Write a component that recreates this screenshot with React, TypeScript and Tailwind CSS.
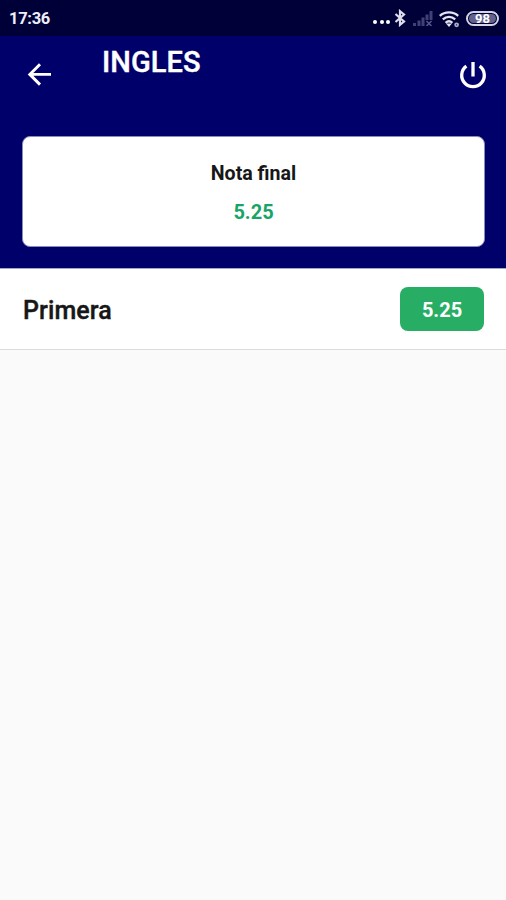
import type { ReactNode } from "react";

type Term = { name: string; grade: string };

const terms: Term[] = [{ name: "Primera", grade: "5.25" }];

function BluetoothIcon() {
  return (
    <svg width="12" height="18" viewBox="0 0 12 18" fill="none" stroke="#dedeee" strokeWidth="2.2">
      <path d="M1.5 5 10 12.5 6 15.8V2.2L10 5.5 1.5 13" />
    </svg>
  );
}

function SignalIcon() {
  return (
    <svg width="20" height="15" viewBox="0 0 20 15" fill="#404074">
      <path d="M0 12h3v3H0zM4.5 9.5h3V15h-3zM8.5 6.5h3V15h-3zM12.5 3.5h3V9h-3zM16.5 0h3v9h-3z" />
      <path d="m13.5 10 5 5m0-5-5 5" stroke="#55558a" strokeWidth="1.6" />
    </svg>
  );
}

function WifiIcon() {
  return (
    <svg width="22" height="17" viewBox="0 0 22 17" fill="none" stroke="#e4e4f0" strokeWidth="2.3">
      <path d="M.8 4.8c5.2-4.6 13.2-4.6 18.4 0M3.8 8.4c3.7-3.2 8.7-3.2 12.4 0M6.6 11.8c2-1.8 4.8-1.8 6.8 0" />
      <path d="m7 12.4 3 3.6 3-3.6z" fill="#e4e4f0" stroke="none" />
      <circle cx="17.6" cy="13.8" r="1.5" stroke="#aaaacb" strokeWidth="1.8" />
    </svg>
  );
}

function Battery({ children }: { children: ReactNode }) {
  return (
    <div className="flex h-[15px] w-[33px] items-center justify-center rounded-full border-2 border-[#d4d4e5] p-px">
      <div className="flex h-full w-full items-center justify-center rounded-full bg-[#62628c] text-[13px] leading-none font-bold text-white">
        {children}
      </div>
    </div>
  );
}

function StatusBar() {
  return (
    <div className="flex h-9 items-center bg-[#000038] pr-[7px] pl-[9px] text-[#eeeef7]">
      <span className="pt-0.5 text-[16.5px] leading-none font-bold tracking-[-0.3px]">17:36</span>
      <div className="ml-auto flex items-center">
        <div className="mt-2 mr-1 flex gap-[2.5px]">
          <span className="size-1 rounded-full bg-white" />
          <span className="size-1 rounded-full bg-white" />
          <span className="size-1 rounded-full bg-white" />
        </div>
        <BluetoothIcon />
        <span className="ml-[7px]">
          <SignalIcon />
        </span>
        <span className="mt-0.5 mr-[5px] ml-1.5">
          <WifiIcon />
        </span>
        <Battery>98</Battery>
      </div>
    </div>
  );
}

function Header() {
  return (
    <header className="h-[232px] bg-[#00006b] pr-[21px] pl-[22px] text-white">
      <div className="flex h-[100px] items-start">
        <button className="mt-[26px] ml-[5px]" aria-label="Volver">
          <svg width="25" height="24" viewBox="0 0 25 24" fill="none" stroke="currentColor" strokeWidth="2.9">
            <path d="M24 12.4H3M13 2.2 2.8 12.4 13 22.6" />
          </svg>
        </button>
        <h1 className="mt-2 ml-[50px] text-[29px] leading-9 font-medium tracking-[0.1px] [-webkit-text-stroke:0.4px_white]">
          INGLES
        </h1>
        <button className="mt-6 mr-[-2px] ml-auto" aria-label="Salir">
          <svg width="28" height="30" viewBox="0 0 28 30" fill="none" stroke="currentColor" strokeWidth="3.3">
            <path d="M14 2v14.5M7.4 6.2a11.3 11.3 0 1 0 13.2 0" />
          </svg>
        </button>
      </div>
      <div className="flex h-[111px] flex-col items-center rounded-lg border border-[#8b8bbb] bg-white pt-[25px]">
        <p className="text-[19.6px] leading-6 font-bold text-[#171717]">Nota final</p>
        <p className="mt-3.5 text-[20px] leading-6 font-bold text-[#16a567]">5.25</p>
      </div>
    </header>
  );
}

function TermRow({ name, grade }: Term) {
  return (
    <div className="flex h-[82px] items-center justify-between border-t border-b border-t-[#a5a5ca] border-b-[#dcdcdc] bg-white pr-[22px] pl-[23px]">
      <span className="pt-[3px] text-[25px] font-medium tracking-[0.1px] text-[#171717] [-webkit-text-stroke:0.4px_#171717]">
        {name}
      </span>
      <span className="flex h-11 w-[84px] items-center justify-center rounded-lg bg-[#27ae64] pt-0.5 text-[20px] font-bold text-white">
        {grade}
      </span>
    </div>
  );
}

export default function App() {
  return (
    <div className="min-h-screen bg-[#fafafa] font-['Roboto',sans-serif]">
      <StatusBar />
      <Header />
      <main>
        {terms.map((term) => (
          <TermRow key={term.name} {...term} />
        ))}
      </main>
    </div>
  );
}
